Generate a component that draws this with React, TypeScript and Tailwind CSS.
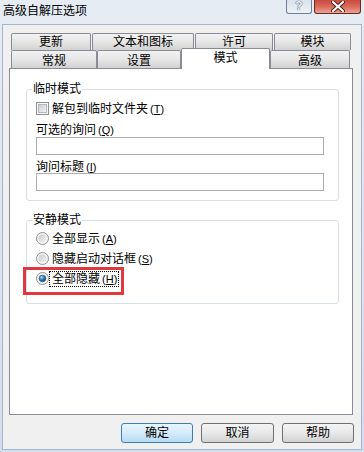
import React from "react";

const font = "font-['Liberation_Sans','Noto_Sans_CJK_SC',sans-serif]";

function Key({ k }: { k: string }) {
  return (
    <span className="ml-[2px] text-[11px]">
      (<span className="underline underline-offset-1">{k}</span>)
    </span>
  );
}

function Tab({ label, cls, active }: { label: string; cls: string; active?: boolean }) {
  if (active) {
    return (
      <div
        className={`${cls} h-[21px] -mb-[1px] relative z-10 flex items-center justify-center pb-[3px] bg-white border border-b-0 border-[#898c95] rounded-t-[2px]`}
      >
        {label}
      </div>
    );
  }
  return (
    <div
      className={`${cls} flex items-center justify-center border border-b-0 border-[#898c95] rounded-t-[2px] bg-gradient-to-b from-[#f2f2f2] via-[#e6e6e6] to-[#d2d2d2]`}
    >
      {label}
    </div>
  );
}

function Checkbox() {
  return (
    <svg width="13" height="13" viewBox="0 0 13 13">
      <defs>
        <linearGradient id="cbg" x1="0" y1="0" x2="1" y2="1">
          <stop offset="0" stopColor="#c9ccd1" />
          <stop offset="1" stopColor="#f5f5f5" />
        </linearGradient>
      </defs>
      <rect x="0.5" y="0.5" width="12" height="12" fill="#f8f8f8" stroke="#8e8f8f" />
      <rect x="2.5" y="2.5" width="8" height="8" fill="url(#cbg)" stroke="#b4b8bd" />
    </svg>
  );
}

function Radio({ id, checked }: { id: string; checked?: boolean }) {
  return (
    <svg width="13" height="13" viewBox="0 0 13 13">
      <defs>
        <linearGradient id={`rg-${id}`} x1="0" y1="0" x2="1" y2="1">
          <stop offset="0" stopColor="#c6c9ce" />
          <stop offset="1" stopColor="#f4f4f4" />
        </linearGradient>
        <radialGradient id={`rb-${id}`} cx="0.35" cy="0.3" r="0.8">
          <stop offset="0" stopColor="#a9dcf7" />
          <stop offset="0.5" stopColor="#2f7cb5" />
          <stop offset="1" stopColor="#163f63" />
        </radialGradient>
      </defs>
      <circle cx="6.5" cy="6.5" r="6" fill="#f6f6f6" stroke="#8e8f8f" />
      <circle cx="6.5" cy="6.5" r="4" fill={`url(#rg-${id})`} />
      {checked && <circle cx="6.5" cy="6.5" r="3.3" fill={`url(#rb-${id})`} stroke="#1c4a70" strokeWidth="0.6" />}
    </svg>
  );
}

function Btn({ label, cls, primary }: { label: string; cls: string; primary?: boolean }) {
  return (
    <div
      className={`${cls} h-[20px] flex items-center justify-center rounded-[3px] border ${
        primary
          ? "border-[#3c7fb1] bg-gradient-to-b from-[#e9f5fc] via-[#d4ecfa] to-[#b6dcf4]"
          : "border-[#707070] bg-gradient-to-b from-[#f4f4f4] via-[#e8e8e8] to-[#d2d2d2]"
      }`}
    >
      {label}
    </div>
  );
}

function Group({ title, cls, children }: { title: string; cls: string; children: React.ReactNode }) {
  return (
    <div className={`${cls} relative w-[313px] border border-[#d5dfe5] rounded-[3px]`}>
      <span className="absolute left-[5px] top-[-8px] bg-white px-[1px] leading-[14px]">{title}</span>
      {children}
    </div>
  );
}

export default function App() {
  return (
    <div
      className={`w-[364px] h-[452px] flex flex-col bg-gradient-to-b from-[#e6ecf4] to-[#d3deec] text-[12px] text-black ${font}`}
    >
      {/* title bar */}
      <div className="h-[24px] flex items-start justify-between">
        <span className="pl-[3px] pt-[4px] leading-[14px]">高级自解压选项</span>
        <div className="flex gap-[2px] mr-[3px]">
          <div className="w-[26px] h-[14px] flex items-end justify-center rounded-b-[3px] border border-t-0 border-[#6f7f95] bg-gradient-to-b from-[#d8e2ee] to-[#eef2f7] text-[12px] leading-[13px] font-bold text-[#f4f6f9] [text-shadow:0_0_1px_#344a66,0_0_1px_#344a66]">
            ?
          </div>
          <div className="w-[47px] h-[14px] flex items-center justify-center rounded-b-[3px] border border-t-0 border-[#6a2a24] bg-gradient-to-b from-[#c94a3e] via-[#d86a5c] to-[#e9a193]">
            <svg width="14" height="11" viewBox="0 0 14 11">
              <path d="M2 1 L12 10 M12 1 L2 10" stroke="#4a1a16" strokeWidth="4" strokeLinecap="round" />
              <path d="M2 1 L12 10 M12 1 L2 10" stroke="#ffffff" strokeWidth="2.2" strokeLinecap="round" />
            </svg>
          </div>
        </div>
      </div>

      {/* client area */}
      <div className="flex-1 mx-[2px] mb-[2px] border border-[#a6b4c7] bg-[#f0f0f0] flex flex-col">
        <div className="ml-[6px] mt-[8px] w-[344px]">
          {/* back row */}
          <div className="flex gap-[1px] pl-[2px] h-[17px]">
            <Tab label="更新" cls="w-[80px]" />
            <Tab label="文本和图标" cls="w-[102px]" />
            <Tab label="许可" cls="w-[78px]" />
            <Tab label="模块" cls="w-[77px]" />
          </div>
          {/* front row */}
          <div className="flex items-end pl-[2px] h-[18px]">
            <Tab label="常规" cls="w-[86px] h-[18px] pt-[2px]" />
            <Tab label="设置" cls="w-[84px] h-[18px] pt-[2px]" />
            <Tab label="模式" cls="w-[89px]" active />
            <Tab label="高级" cls="w-[80px] h-[18px] pt-[2px]" />
          </div>

          {/* page */}
          <div className="h-[347px] border border-[#898c95] bg-white flex flex-col">
            <Group title="临时模式" cls="ml-[16px] mt-[20px] h-[112px]">
              <div className="flex flex-col pl-[9px] pt-[12px]">
                <div className="flex items-center gap-[3px] h-[13px]">
                  <Checkbox />
                  <span className="leading-[12px]">
                    解包到临时文件夹
                    <Key k="T" />
                  </span>
                </div>
                <span className="mt-[9px] leading-[12px]">
                  可选的询问
                  <Key k="Q" />
                </span>
                <div className="mt-[1px] w-[288px] h-[18px] border border-[#abadb3] bg-white" />
                <span className="mt-[6px] leading-[12px]">
                  询问标题
                  <Key k="I" />
                </span>
                <div className="w-[288px] h-[18px] border border-[#abadb3] bg-white" />
              </div>
            </Group>

            <Group title="安静模式" cls="ml-[16px] mt-[19px] h-[84px]">
              <div className="flex flex-col gap-[7px] pl-[9px] pt-[11px]">
                <div className="flex items-center gap-[3px] h-[13px]">
                  <Radio id="a" />
                  <span className="leading-[12px]">
                    全部显示
                    <Key k="A" />
                  </span>
                </div>
                <div className="flex items-center gap-[3px] h-[13px]">
                  <Radio id="s" />
                  <span className="leading-[12px]">
                    隐藏启动对话框
                    <Key k="S" />
                  </span>
                </div>
                <div className="flex items-center h-[13px]">
                  <Radio id="h" checked />
                  <span className="leading-[14px] pl-[2px] pr-[1px] whitespace-nowrap border border-dotted border-black">
                    全部隐藏
                    <Key k="H" />
                  </span>
                </div>
              </div>
              {/* highlight annotation */}
              <div className="absolute left-[-4px] top-[46px] w-[101px] h-[28px] border-[3px] border-[#e2373d]" />
            </Group>
          </div>
        </div>

        {/* buttons */}
        <div className="mt-[8px] flex justify-end gap-[8px] pr-[7px]">
          <Btn label="确定" cls="w-[72px]" primary />
          <Btn label="取消" cls="w-[73px]" />
          <Btn label="帮助" cls="w-[72px]" />
        </div>
      </div>
    </div>
  );
}
